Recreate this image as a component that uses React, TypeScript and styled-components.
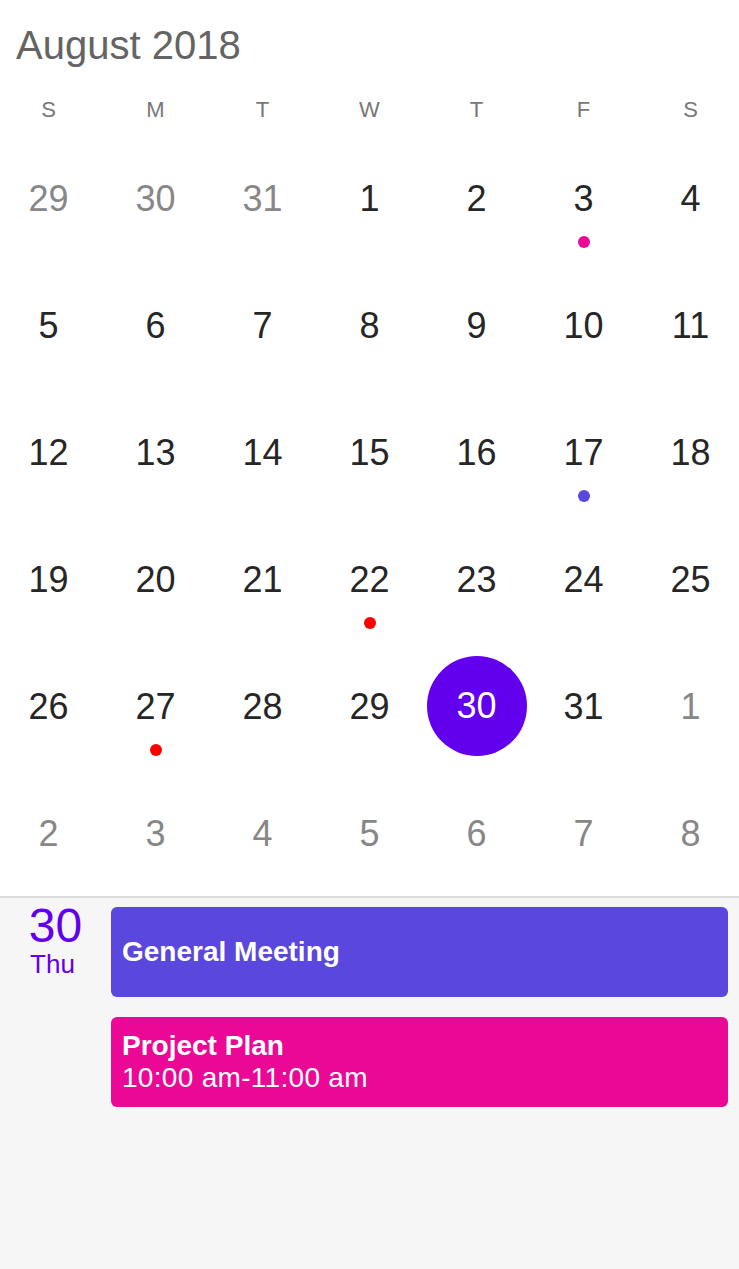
import React from 'react';
import styled, { createGlobalStyle } from 'styled-components';

const purple = '#6200ee';
const indigo = '#5a47dd';
const pink = '#ec0896';
const red = '#ff0000';

const GlobalStyle = createGlobalStyle`
  html, body {
    margin: 0;
    padding: 0;
    background: #ffffff;
  }
  body {
    font-family: "Liberation Sans", Arial, sans-serif;
    -webkit-font-smoothing: antialiased;
  }
`;

const Page = styled.div`
  display: flex;
  flex-direction: column;
  min-height: 100vh;
  overflow: hidden;
`;

const Calendar = styled.div`
  background: #ffffff;
`;

const Title = styled.div`
  height: 90px;
  display: flex;
  align-items: center;
  padding-left: 16px;
  font-size: 40px;
  line-height: 48px;
  color: #646464;
`;

const Grid = styled.div`
  display: grid;
  grid-template-columns: repeat(7, 107px);
  justify-content: center;
`;

const WeekDay = styled.div`
  height: 44px;
  padding-top: 9px;
  box-sizing: border-box;
  text-align: center;
  font-size: 22px;
  line-height: 22px;
  color: #777777;
`;

const Cell = styled.div`
  height: 127px;
  padding-top: 15px;
  box-sizing: border-box;
  display: flex;
  flex-direction: column;
  align-items: center;
`;

const DayNumber = styled.div<{ $muted?: boolean; $selected?: boolean }>`
  width: 100px;
  height: 100px;
  margin-top: ${p => (p.$selected ? '-1px' : '0')};
  border-radius: 50%;
  display: flex;
  align-items: center;
  justify-content: center;
  font-size: 36px;
  line-height: 40px;
  background: ${p => (p.$selected ? purple : 'transparent')};
  color: ${p => (p.$selected ? '#ffffff' : p.$muted ? '#878787' : '#262626')};
`;

const Dot = styled.div<{ $color: string }>`
  width: 12px;
  height: 12px;
  margin-top: -13px;
  border-radius: 50%;
  background: ${p => p.$color};
`;

const Agenda = styled.div`
  flex: 1;
  display: flex;
  align-items: flex-start;
  background: #f6f6f6;
  border-top: 2px solid #dddddd;
  padding-top: 9px;
`;

const DateColumn = styled.div`
  width: 111px;
  flex-shrink: 0;
  display: flex;
  flex-direction: column;
  align-items: center;
  color: ${purple};
`;

const DateNumber = styled.div`
  font-size: 48px;
  line-height: 40px;
  margin-top: -1px;
`;

const DateWeekday = styled.div`
  font-size: 26px;
  line-height: 30px;
  margin-top: 3px;
  margin-left: -6px;
`;

const Events = styled.div`
  flex: 1;
  display: flex;
  flex-direction: column;
  gap: 20px;
  padding-right: 11px;
`;

const EventCard = styled.div<{ $color: string }>`
  height: 90px;
  box-sizing: border-box;
  padding-left: 11px;
  border-radius: 6px;
  background: ${p => p.$color};
  color: #ffffff;
  display: flex;
  flex-direction: column;
  justify-content: center;
`;

const EventTitle = styled.div`
  font-size: 28px;
  line-height: 32px;
  font-weight: 700;
`;

const EventTime = styled.div`
  font-size: 28px;
  line-height: 32px;
  letter-spacing: 0.3px;
`;

type Day = { n: number; muted?: boolean; dot?: string; selected?: boolean };

const weeks: Day[][] = [
  [{ n: 29, muted: true }, { n: 30, muted: true }, { n: 31, muted: true }, { n: 1 }, { n: 2 }, { n: 3, dot: pink }, { n: 4 }],
  [{ n: 5 }, { n: 6 }, { n: 7 }, { n: 8 }, { n: 9 }, { n: 10 }, { n: 11 }],
  [{ n: 12 }, { n: 13 }, { n: 14 }, { n: 15 }, { n: 16 }, { n: 17, dot: indigo }, { n: 18 }],
  [{ n: 19 }, { n: 20 }, { n: 21 }, { n: 22, dot: red }, { n: 23 }, { n: 24 }, { n: 25 }],
  [{ n: 26 }, { n: 27, dot: red }, { n: 28 }, { n: 29 }, { n: 30, selected: true }, { n: 31 }, { n: 1, muted: true }],
  [2, 3, 4, 5, 6, 7, 8].map(n => ({ n, muted: true })),
];

const weekDays = ['S', 'M', 'T', 'W', 'T', 'F', 'S'];

export default function App() {
  return (
    <Page>
      <GlobalStyle />
      <Calendar>
        <Title>August 2018</Title>
        <Grid>
          {weekDays.map((d, i) => (
            <WeekDay key={i}>{d}</WeekDay>
          ))}
          {weeks.flat().map((day, i) => (
            <Cell key={i}>
              <DayNumber $muted={day.muted} $selected={day.selected}>
                {day.n}
              </DayNumber>
              {day.dot && <Dot $color={day.dot} />}
            </Cell>
          ))}
        </Grid>
      </Calendar>
      <Agenda>
        <DateColumn>
          <DateNumber>30</DateNumber>
          <DateWeekday>Thu</DateWeekday>
        </DateColumn>
        <Events>
          <EventCard $color={indigo}>
            <EventTitle>General Meeting</EventTitle>
          </EventCard>
          <EventCard $color={pink}>
            <EventTitle>Project Plan</EventTitle>
            <EventTime>10:00 am-11:00 am</EventTime>
          </EventCard>
        </Events>
      </Agenda>
    </Page>
  );
}
